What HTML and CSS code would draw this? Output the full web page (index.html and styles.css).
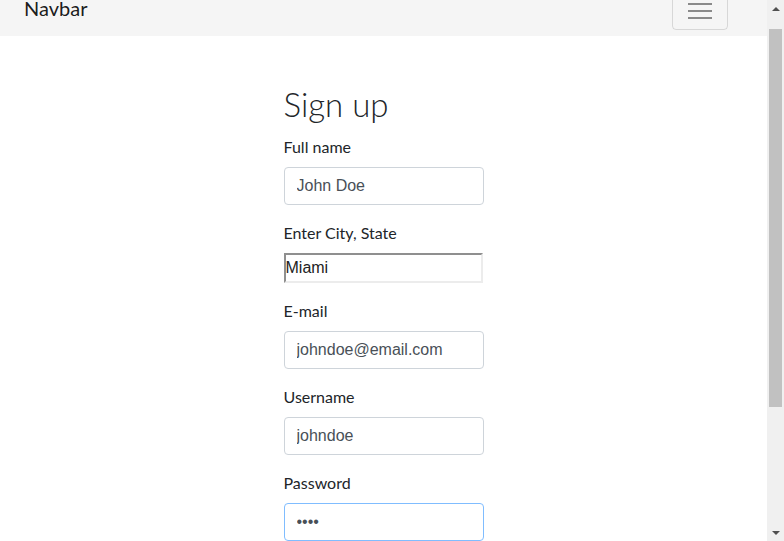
FILE: index.html
```html
<!DOCTYPE html>
<html lang="en">
<head>
<meta charset="utf-8">
<title>Sign up</title>
<link rel="stylesheet" href="styles.css">
</head>
<body>
<div class="window">
  <div class="viewport">
    <nav class="navbar">
      <a class="brand" href="#">Navbar</a>
      <button class="toggler" type="button" aria-label="Toggle navigation">
        <span class="bar"></span><span class="bar"></span><span class="bar"></span>
      </button>
    </nav>
    <main class="content">
      <form class="signup">
        <h2 class="title">Sign up</h2>
        <div class="group">
          <label class="label" for="fullname">Full name</label>
          <input class="field" id="fullname" type="text" value="John Doe">
        </div>
        <div class="group">
          <label class="label" for="city">Enter City, State</label>
          <input class="plain" id="city" type="text" value="Miami">
        </div>
        <div class="group">
          <label class="label" for="email">E-mail</label>
          <input class="field" id="email" type="text" value="johndoe@email.com">
        </div>
        <div class="group">
          <label class="label" for="username">Username</label>
          <input class="field" id="username" type="text" value="johndoe">
        </div>
        <div class="group">
          <label class="label" for="password">Password</label>
          <input class="field focused" id="password" type="password" value="abcd">
        </div>
      </form>
    </main>
  </div>
  <div class="scrollbar" aria-hidden="true">
    <div class="arrow up"></div>
    <div class="track">
      <div class="thumb"></div>
    </div>
    <div class="arrow down"></div>
  </div>
</div>
</body>
</html>
```

FILE: styles.css
```css
* { box-sizing: border-box; }

html, body {
  margin: 0;
  padding: 0;
  height: 100%;
  overflow: hidden;
  background: #fff;
}

body {
  font-family: Lato, "Noto Sans", sans-serif;
  color: #212529;
  font-size: 16px;
  line-height: 1.5;
}

.window {
  display: flex;
  height: 541px;
  width: 784px;
}

.viewport {
  flex: 1;
  overflow: hidden;
  display: flex;
  flex-direction: column;
}

.navbar {
  flex: none;
  height: 56px;
  margin-top: -20px;
  background: #f5f5f5;
  padding: 8px 39px 6px 24px;
  display: flex;
  align-items: flex-end;
  justify-content: space-between;
}

.brand {
  align-self: flex-end;
  font-size: 20px;
  line-height: 20px;
  margin-bottom: 12px;
  color: rgba(0,0,0,.9);
  text-decoration: none;
}

.toggler {
  width: 56px;
  height: 40px;
  border: 1px solid rgba(0,0,0,.12);
  border-radius: 4px;
  background: transparent;
  padding: 2px 0 0;
  display: flex;
  flex-direction: column;
  align-items: center;
  justify-content: center;
  gap: 5px;
}

.bar {
  display: block;
  width: 24px;
  height: 2px;
  background: #8a8a8a;
}

.content {
  flex: 1;
  display: flex;
  justify-content: center;
  padding-top: 53px;
}

.signup {
  width: 200px;
}

.title {
  margin: 0 0 16px;
  font-size: 33px;
  font-weight: 300;
  line-height: 30px;
  color: #212529;
}

.group {
  margin-bottom: 16px;
}

.label {
  display: block;
  margin-bottom: 8px;
  font-size: 16px;
  line-height: 24px;
}

.field {
  display: block;
  width: 200px;
  height: 38px;
  padding: 6px 12px;
  font-family: "Liberation Sans", Arial, sans-serif;
  font-size: 16px;
  line-height: 24px;
  color: #495057;
  background: #fff;
  border: 1px solid #ced4da;
  border-radius: 4px;
  outline: none;
}

.field.focused {
  border-color: #80bdff;
}

.plain {
  display: block;
  width: 199px;
  height: 30px;
  padding: 1px 0;
  font-family: "Liberation Sans", Arial, sans-serif;
  font-size: 16px;
  color: #222;
  background: #fff;
  border-style: solid;
  border-width: 2px;
  border-color: #8f8f8f #ececec #ececec #8f8f8f;
  border-radius: 0;
  outline: none;
}

.scrollbar {
  flex: none;
  width: 17px;
  background: #f0f0f0;
  display: flex;
  flex-direction: column;
}

.arrow {
  flex: none;
  height: 17px;
  display: flex;
  align-items: center;
  justify-content: center;
}

.arrow::before {
  content: "";
  width: 0;
  height: 0;
  border-left: 4px solid transparent;
  border-right: 4px solid transparent;
}

.arrow.up::before {
  border-bottom: 4px solid #505050;
}

.arrow.down::before {
  border-top: 4px solid #505050;
}

.track {
  flex: 1;
  padding: 12px 2px 0;
}

.thumb {
  height: 378px;
  background: #c1c1c1;
}
```
